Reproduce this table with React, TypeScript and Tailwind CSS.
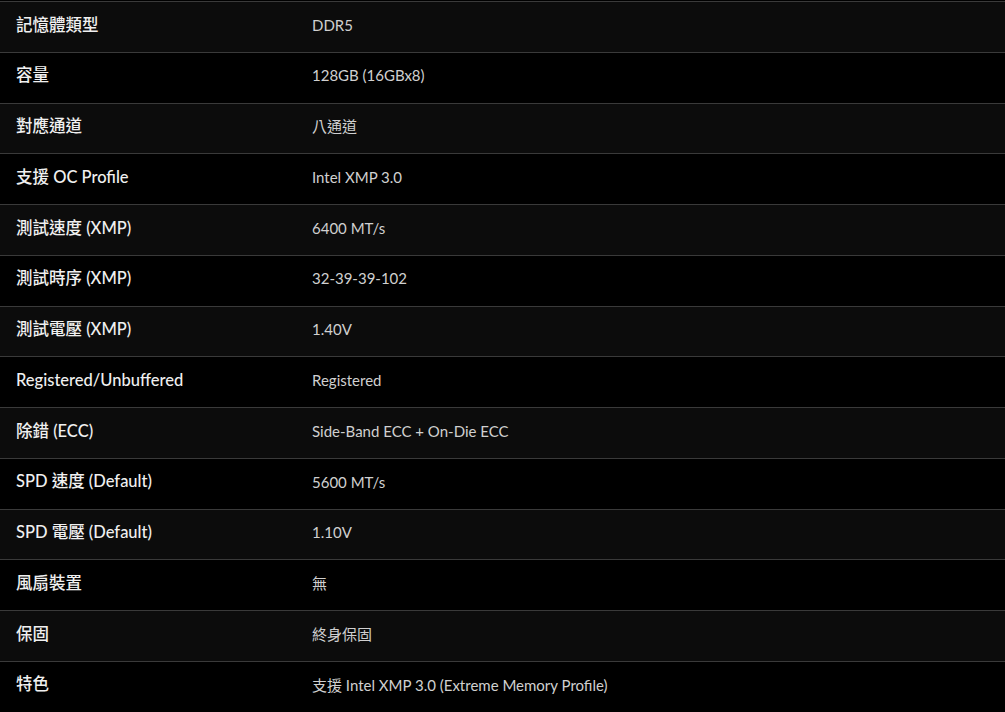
const specs: [string, string][] = [
  ["記憶體類型", "DDR5"],
  ["容量", "128GB (16GBx8)"],
  ["對應通道", "八通道"],
  ["支援 OC Profile", "Intel XMP 3.0"],
  ["測試速度 (XMP)", "6400 MT/s"],
  ["測試時序 (XMP)", "32-39-39-102"],
  ["測試電壓 (XMP)", "1.40V"],
  ["Registered/Unbuffered", "Registered"],
  ["除錯 (ECC)", "Side-Band ECC + On-Die ECC"],
  ["SPD 速度 (Default)", "5600 MT/s"],
  ["SPD 電壓 (Default)", "1.10V"],
  ["風扇裝置", "無"],
  ["保固", "終身保固"],
  ["特色", "支援 Intel XMP 3.0 (Extreme Memory Profile)"],
]

export default function App() {
  return (
    <div
      className="w-[1005px] h-[712px] overflow-hidden bg-black pt-px"
      style={{ fontFamily: 'Lato, "Noto Sans CJK TC", sans-serif' }}
    >
      {specs.map(([label, value], i) => (
        <div
          key={label}
          className={
            "grid grid-cols-[296px_1fr] items-center h-[50.77px] border-t border-[#3a3a3a] pb-[4px] " +
            (i % 2 === 0 ? "bg-[#0c0c0c]" : "bg-black")
          }
        >
          <div className="pl-4 text-[16.5px] font-medium text-[#f0f0f0]">{label}</div>
          <div className="pl-4 text-[15px] text-[#d0d0d0]">{value}</div>
        </div>
      ))}
    </div>
  )
}
